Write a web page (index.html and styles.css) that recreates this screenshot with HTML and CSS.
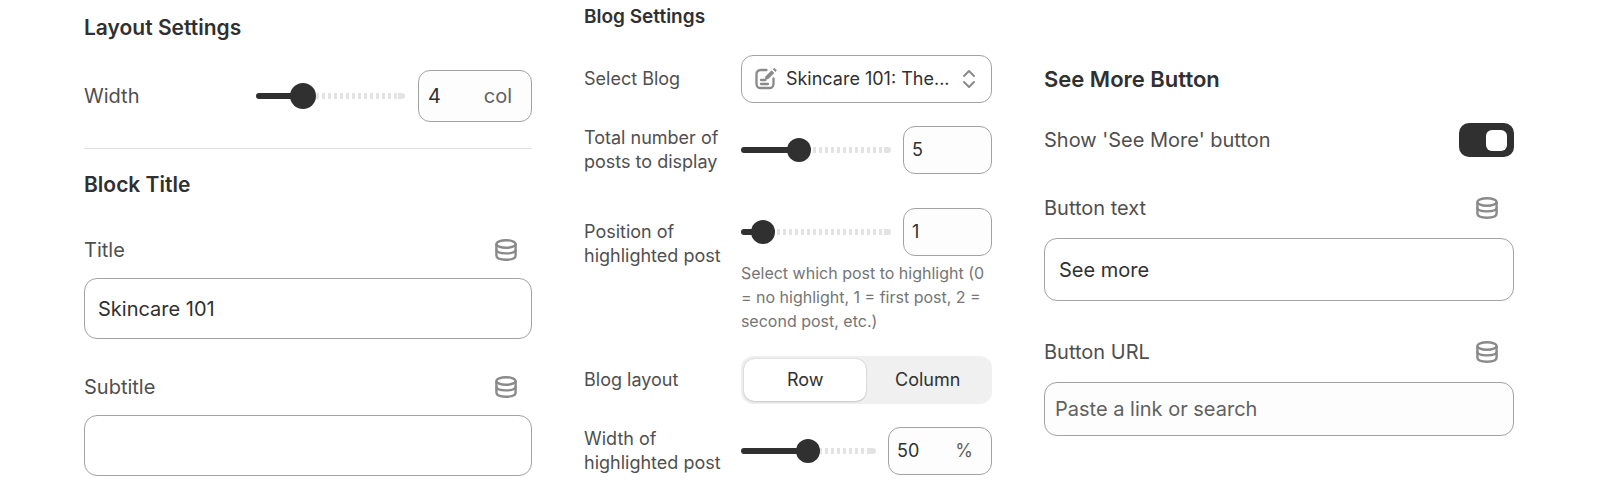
FILE: index.html
```
<!DOCTYPE html>
<html lang="en">
<head>
  <meta charset="UTF-8" />
  <meta name="viewport" content="width=device-width, initial-scale=1.0"/>
  <title>Blog Block Settings</title>
  <link rel="stylesheet" href="styles.css">
</head>
<body>

<svg class="sprite" aria-hidden="true">
  <symbol id="icon-database" viewBox="0 0 22 22">
    <g fill="none" stroke="currentColor" stroke-width="2.4">
      <ellipse cx="11" cy="5" rx="9.6" ry="3.8"/>
      <path d="M1.4 5v11.5c0 2.6 3.800 4.200 9.600 4.200s9.600-1.600 9.600-4.200V5"/>
      <path d="M1.400 10.500c0 2.400 4 3.900 9.600 3.900s9.600-1.500 9.600-3.900"/>
    </g>
  </symbol>
</svg>

<form class="settings">

  <section class="panel panel-layout">
    <h2>Layout Settings</h2>
    <div class="width-row">
      <label for="width">Width</label>
      <input type="range" class="slider" id="width" min="1" max="12" value="4" style="--fill: 31%">
      <div class="number-box">
        <input type="text" value="4" aria-label="Width in columns">
        <span class="unit">col</span>
      </div>
    </div>
    <hr>
    <h2>Block Title</h2>
    <div class="field">
      <div class="field-head">
        <label for="title">Title</label>
        <button type="button" class="icon-btn" aria-label="Connect title"><svg><use href="#icon-database"/></svg></button>
      </div>
      <input type="text" class="text-input" id="title" value="Skincare 101">
    </div>
    <div class="field">
      <div class="field-head">
        <label for="subtitle">Subtitle</label>
        <button type="button" class="icon-btn" aria-label="Connect subtitle"><svg><use href="#icon-database"/></svg></button>
      </div>
      <input type="text" class="text-input" id="subtitle">
    </div>
  </section>

  <section class="panel panel-blog">
    <h2>Blog Settings</h2>
    <div class="row">
      <label for="blog">Select Blog</label>
      <div class="select-box">
        <svg class="select-icon" viewBox="0 0 22 22" aria-hidden="true">
          <path d="M11.500 2H5.500A4 4 0 0 0 1.500 6v10a4 4 0 0 0 4 4h9a4 4 0 0 0 4-4v-5.500M6 12h4.500M6 16h7" fill="none" stroke="currentColor" stroke-width="2.3" stroke-linecap="round"/>
          <path d="M9.600 11.800l1-3.600 6-6 2.700 2.700-6 6z" fill="currentColor"/>
          <path d="M17.700 1.300l.900-.900a1 1 0 0 1 1.400 0l1.300 1.300a1 1 0 0 1 0 1.400l-.900.900z" fill="currentColor"/>
        </svg>
        <select id="blog">
          <option>Skincare 101: The...</option>
        </select>
        <svg class="select-arrows" viewBox="0 0 14 20" aria-hidden="true">
          <path d="M2 7l5-5 5 5M2 13l5 5 5-5" fill="none" stroke="currentColor" stroke-width="2" stroke-linecap="round" stroke-linejoin="round"/>
        </svg>
      </div>
    </div>
    <div class="row">
      <label for="total">Total number of posts to display</label>
      <div class="control">
        <input type="range" class="slider" id="total" min="1" max="12" value="5" style="--fill: 39%">
        <div class="number-box"><input type="text" value="5" aria-label="Total posts"></div>
      </div>
    </div>
    <div class="row row-help">
      <label for="position">Position of highlighted post</label>
      <div>
        <div class="control">
          <input type="range" class="slider" id="position" min="0" max="12" value="1" style="--fill: 15%">
          <div class="number-box"><input type="text" value="1" aria-label="Highlighted position"></div>
        </div>
        <p class="help">Select which post to highlight (0 = no highlight, 1 = first post, 2 = second post, etc.)</p>
      </div>
    </div>
    <div class="row">
      <span class="label">Blog layout</span>
      <div class="segmented" role="group" aria-label="Blog layout">
        <button type="button" class="active" aria-pressed="true">Row</button>
        <button type="button" aria-pressed="false">Column</button>
      </div>
    </div>
    <div class="row">
      <label for="post-width">Width of highlighted post</label>
      <div class="control control-unit">
        <input type="range" class="slider" id="post-width" min="0" max="100" value="50" style="--fill: 50%">
        <div class="number-box">
          <input type="text" value="50" aria-label="Highlighted post width">
          <span class="unit">%</span>
        </div>
      </div>
    </div>
  </section>

  <section class="panel panel-button">
    <h2>See More Button</h2>
    <div class="toggle-row">
      <label for="show-more">Show 'See More' button</label>
      <input type="checkbox" class="toggle" id="show-more" checked>
    </div>
    <div class="field">
      <div class="field-head">
        <label for="button-text">Button text</label>
        <button type="button" class="icon-btn" aria-label="Connect button text"><svg><use href="#icon-database"/></svg></button>
      </div>
      <input type="text" class="text-input" id="button-text" value="See more">
    </div>
    <div class="field">
      <div class="field-head">
        <label for="button-url">Button URL</label>
        <button type="button" class="icon-btn" aria-label="Connect button URL"><svg><use href="#icon-database"/></svg></button>
      </div>
      <input type="text" class="text-input link-input" id="button-url" placeholder="Paste a link or search">
    </div>
  </section>

</form>

</body>
</html>
```
FILE: styles.css
```
* {
  box-sizing: border-box;
}

body {
  margin: 0;
  background: #fff;
  font-family: Inter, "Liberation Sans", sans-serif;
  color: #303030;
}

.sprite {
  display: none;
}

.settings {
  display: grid;
  grid-template-columns: 448fr 408fr 470fr;
  gap: 52px;
  padding: 0 86px 0 84px;
}

.panel {
  min-width: 0;
  font-size: 20px;
}

h2 {
  margin: 0;
  font-size: 21px;
  font-weight: 600;
  line-height: 28px;
}

label,
.label {
  color: #4f4f4f;
}

input,
select,
button {
  font: inherit;
  color: inherit;
}

hr {
  margin: 26px 0 22px;
  border: 0;
  border-top: 1px solid #e0e0e0;
}

/* Text fields */
.field-head {
  display: flex;
  align-items: center;
  justify-content: space-between;
  height: 28px;
  padding-right: 15px;
}

.icon-btn {
  display: flex;
  padding: 0;
  border: 0;
  background: none;
  color: #8a8a8a;
  cursor: pointer;
}

.icon-btn svg {
  width: 22px;
  height: 22px;
}

.text-input {
  display: block;
  width: 100%;
  height: 61px;
  padding: 0 13px;
  border: 1px solid #a2a2a2;
  border-radius: 13px;
  background: #fff;
}

.number-box {
  display: flex;
  align-items: center;
  padding: 0 19px 0 9px;
  border: 1px solid #a2a2a2;
  border-radius: 12px;
  background: #fdfdfd;
}

.number-box input {
  flex: 1;
  min-width: 0;
  width: 100%;
  padding: 0;
  border: 0;
  background: none;
  outline: none;
}

.unit {
  color: #616161;
}

/* Sliders */
.slider {
  --thumb: 24px;
  --step: 6px;
  appearance: none;
  -webkit-appearance: none;
  width: 100%;
  min-width: 0;
  height: var(--thumb);
  margin: 0;
  background: none;
}

.slider::-webkit-slider-runnable-track {
  height: 6px;
  border-radius: 3px;
  background:
    linear-gradient(#303030, #303030) left / var(--fill) 100% no-repeat,
    linear-gradient(#e3e3e3, #e3e3e3) right / 7px 100% no-repeat,
    repeating-linear-gradient(to right, #e3e3e3 0 3px, #fff 3px var(--step));
}

.slider::-webkit-slider-thumb {
  -webkit-appearance: none;
  width: var(--thumb);
  height: var(--thumb);
  margin-top: calc(3px - var(--thumb) / 2);
  border-radius: 50%;
  background: #303030;
}

/* Layout and title panel */
.panel-layout {
  padding-top: 14px;
}

.width-row {
  display: grid;
  grid-template-columns: 1fr 149px 114px;
  align-items: center;
  column-gap: 13px;
  margin-top: 28px;
}

.width-row .number-box {
  height: 52px;
}

.width-row .slider {
  --thumb: 26px;
}

.panel-layout .field {
  margin-top: 37px;
}

.panel-layout .field + .field {
  margin-top: 34px;
}

.panel-layout .text-input {
  margin-top: 14px;
}

/* Blog panel */
.panel-blog {
  padding-top: 5px;
  font-size: 18px;
  line-height: 24px;
}

.panel-blog h2 {
  margin-bottom: 26px;
  font-size: 19px;
  line-height: 24px;
}

.row {
  display: grid;
  grid-template-columns: 5fr 8fr;
  align-items: center;
  margin-bottom: 23px;
}

.row label {
  padding-right: 12px;
}

.control {
  display: grid;
  grid-template-columns: 1fr 89px;
  align-items: center;
  gap: 12px;
}

.control-unit {
  grid-template-columns: 1fr 104px;
}

.panel-blog .number-box {
  height: 48px;
  padding: 0 18px 0 8px;
}

.select-box {
  position: relative;
}

.select-box select {
  display: block;
  appearance: none;
  -webkit-appearance: none;
  width: 100%;
  height: 48px;
  padding: 0 36px 0 44px;
  border: 1px solid #a2a2a2;
  border-radius: 12px;
  background: #fff;
}

.select-icon,
.select-arrows {
  position: absolute;
  top: 50%;
  transform: translateY(-50%);
  color: #8a8a8a;
  pointer-events: none;
}

.select-icon {
  left: 14px;
  width: 22px;
  height: 22px;
}

.select-arrows {
  right: 16px;
  width: 14px;
  height: 20px;
}

.row-help {
  align-items: start;
  margin-top: 34px;
}

.row-help label {
  padding-top: 12px;
}

.help {
  margin: 5px 0 0;
  font-size: 16px;
  color: #757575;
}

.segmented {
  display: grid;
  grid-template-columns: 1fr 1fr;
  height: 48px;
  padding: 3px;
  border-radius: 12px;
  background: #f0f0f0;
}

.segmented button {
  padding: 0;
  border: 0;
  border-radius: 10px;
  background: none;
  cursor: pointer;
}

.segmented .active {
  background: #fff;
  box-shadow: 0 0 2px rgba(0, 0, 0, 0.2), 0 1px 2px rgba(0, 0, 0, 0.12);
}

/* See more panel */
.panel-button {
  padding-top: 65px;
}

.panel-button h2 {
  font-size: 22px;
}

.toggle-row {
  display: flex;
  align-items: center;
  justify-content: space-between;
  margin-top: 30px;
}

.toggle {
  display: flex;
  align-items: center;
  justify-content: flex-end;
  appearance: none;
  -webkit-appearance: none;
  width: 55px;
  height: 34px;
  margin: 0;
  padding: 0 7px;
  border-radius: 10px;
  background: #303030;
  cursor: pointer;
}

.toggle:not(:checked) {
  justify-content: flex-start;
  background: #8a8a8a;
}

.toggle::before {
  content: "";
  width: 21px;
  height: 21px;
  border-radius: 6px;
  background: #fff;
}

.panel-button .field {
  margin-top: 37px;
}

.panel-button .field-head {
  padding-right: 16px;
}

.panel-button .text-input {
  height: 63px;
  margin-top: 16px;
  padding: 0 14px;
}

.panel-button .link-input {
  height: 54px;
  padding: 0 10px;
  background: #fdfdfd;
}

.link-input::placeholder {
  color: #616161;
}
```
